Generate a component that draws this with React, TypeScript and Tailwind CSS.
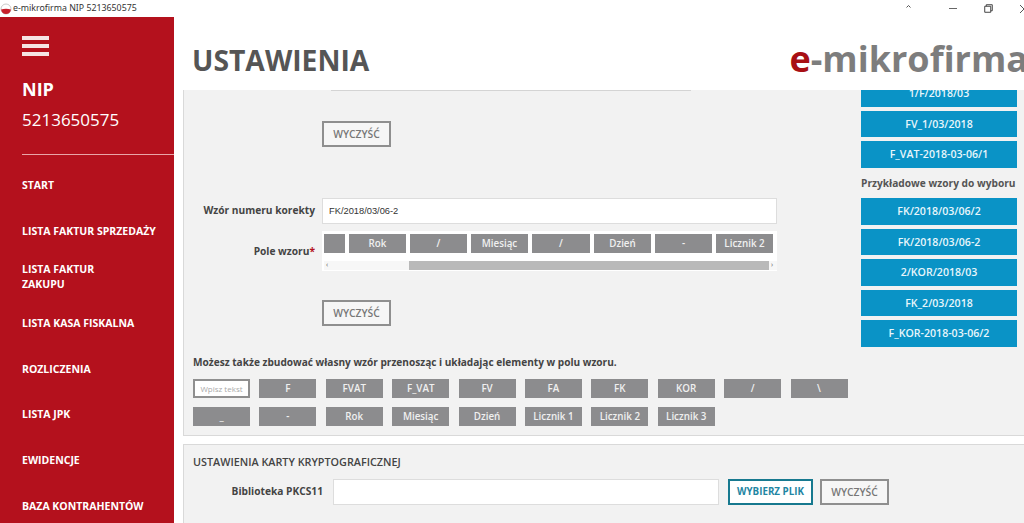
import React from "react";

const Chip = ({ t, w = "w-[57px]" }: { t: string; w?: string }) => (
  <div className={`${w} h-[19px] shrink-0 bg-[#8c8c8e] text-[#f0f0f0] text-[9.8px] font-semibold flex items-center justify-center pt-[1px]`}>{t}</div>
);

const Blue = ({ t, h = "h-[26.5px] pt-[2px]" }: { t: string; h?: string }) => (
  <div className={`${h} w-[156px] shrink-0 bg-[#0a93c6] text-[#e8f6fb] text-[10.6px] font-semibold flex items-center justify-center`}>{t}</div>
);

const Clear = () => (
  <div className="w-[69px] h-[26px] border-2 border-[#8f8f8f] bg-[#f6f6f6] text-[#777] text-[10.3px] font-semibold flex items-center justify-center pt-[1px]">WYCZYŚĆ</div>
);

const nav: string[] = [
  "START",
  "LISTA FAKTUR SPRZEDAŻY",
  "LISTA FAKTUR\nZAKUPU",
  "LISTA KASA FISKALNA",
  "ROZLICZENIA",
  "LISTA JPK",
  "EWIDENCJE",
  "BAZA KONTRAHENTÓW",
];

export default function App() {
  return (
    <div className="w-[1024px] h-[523px] overflow-hidden bg-white flex flex-col font-['Open_Sans',sans-serif]">
      <div className="h-[17px] shrink-0 flex items-center relative overflow-hidden">
        <svg width="12" height="12" viewBox="0 0 12 12">
          <circle cx="6" cy="6" r="5" fill="#fff" stroke="#bbb" strokeWidth="0.8" />
          <path d="M1 6.5 Q6 5 11 6.5 Q10 11 6 11 Q2 11 1 6.5Z" fill="#c8202c" />
        </svg>
        <span className="ml-[1px] text-[8.8px] text-[#333] font-['Noto_Sans',sans-serif]">e-mikrofirma NIP 5213650575</span>
        <div className="absolute -right-[4px] top-0 h-[17px] flex items-center">
          <svg width="5" height="3" viewBox="0 0 5 3" className="mr-[38px] -mt-[5px]"><path d="M0.5 2.5 L2.5 0.5 L4.5 2.5" fill="none" stroke="#555" strokeWidth="1" /></svg>
          <div className="w-[8px] h-[1px] bg-[#666] mr-[27px]" />
          <svg width="9" height="9" viewBox="0 0 10 10" className="mr-[27px]"><path d="M2.5 2.5V.8h6.7v6.7H7.5M.8 2.5h6.7v6.7H.8z" fill="none" stroke="#444" strokeWidth="1.1" /></svg>
          <svg width="8" height="10" viewBox="0 0 8 10"><path d="M0 1 L8 9 M8 1 L0 9" fill="none" stroke="#555" strokeWidth="1" /></svg>
        </div>
      </div>
      <div className="flex-1 flex min-h-0">
        <aside className="w-[174px] shrink-0 bg-[#b4111d] text-white flex flex-col overflow-hidden">
          <div className="ml-[22px] mt-[19px] w-[27px] shrink-0 flex flex-col gap-[4px]">
            <div className="h-[4px] bg-[#f6e4e4]" />
            <div className="h-[4px] bg-[#f6e4e4]" />
            <div className="h-[4px] bg-[#f6e4e4]" />
          </div>
          <div className="ml-[22px] mt-[21px] shrink-0 text-[18px] leading-[25px] font-bold">NIP</div>
          <div className="ml-[22px] mt-[5px] shrink-0 text-[17px] leading-[25px]">5213650575</div>
          <div className="ml-[22px] mt-[22px] h-px shrink-0 bg-[#e9a5a8]" />
          <nav className="mt-[8px] flex flex-col">
            {nav.map((t) => (
              <div key={t} className="h-[45.8px] shrink-0 pl-[22px] flex items-center whitespace-pre-line text-[10.5px] leading-[15px] font-bold">{t}</div>
            ))}
          </nav>
        </aside>
        <main className="flex-1 min-w-0 flex flex-col">
          <header className="h-[73px] shrink-0 pt-[13px] flex items-center justify-between overflow-hidden">
            <h1 className="ml-[18px] text-[28.3px] font-bold text-[#555] leading-none">USTAWIENIA</h1>
            <div className="text-[36px] font-bold leading-none whitespace-nowrap -mr-[4px] -mt-[2px] text-[#7d7d7d]"><span className="text-[#a80f14]">e</span>-mikrofirma</div>
          </header>
          <div className="ml-[9px] flex-1 min-h-0 flex flex-col overflow-hidden">
            <section className="h-[346px] shrink-0 bg-[#f2f2f2] border-b border-l border-[#d9d9d9] relative overflow-hidden">
              <div className="absolute left-[147px] top-0 w-[360px] h-px bg-[#d4d4d4]" />
              <div className="flex pr-[7px] h-full">
                <div className="flex-1 min-w-0 pl-[9px]">
                  <div className="ml-[129px] mt-[31px]"><Clear /></div>
                  <div className="mt-[51px] flex items-center">
                    <div className="w-[122px] mr-[7px] text-right text-[10.2px] font-bold text-[#444] whitespace-nowrap">Wzór numeru korekty</div>
                    <div className="w-[455px] h-[26px] bg-white border border-[#ddd] pl-[6px] pt-[1px] flex items-center text-[9.3px] text-[#333] font-['Liberation_Sans',sans-serif]">FK/2018/03/06-2</div>
                  </div>
                  <div className="mt-[7px] flex">
                    <div className="w-[122px] mr-[7px] mt-[13px] text-right text-[10.2px] font-bold text-[#444]">Pole wzoru<span className="text-[#b4111d]">*</span></div>
                    <div className="w-[455px] h-[40px] bg-white pl-[2px] pt-[3px]">
                      <div className="flex gap-[4px]">
                        <Chip t="" w="w-[21px]" />
                        <Chip t="Rok" /><Chip t="/" /><Chip t="Miesiąc" /><Chip t="/" w="w-[58px]" /><Chip t="Dzień" /><Chip t="-" /><Chip t="Licznik 2" />
                      </div>
                      <div className="mt-[8px] h-[9px] flex items-center bg-[#f7f7f7] text-[7px] text-[#555]">
                        <span className="w-[85px] pl-[2px]">‹</span>
                        <div className="w-[360px] h-[9px] bg-[#b9b9b9]" />
                        <span className="pl-[2px]">›</span>
                      </div>
                    </div>
                  </div>
                  <div className="ml-[129px] mt-[29px]"><Clear /></div>
                  <p className="mt-[29px] text-[10.1px] font-bold text-[#444] leading-[15px] whitespace-nowrap">Możesz także zbudować własny wzór przenosząc i układając elementy w polu wzoru.</p>
                  <div className="mt-[9px] flex gap-[9.4px]">
                    <div className="w-[57px] h-[19px] shrink-0 bg-white border-2 border-[#8f8f8f] text-[#aaa] text-[8px] flex items-center justify-center">Wpisz tekst</div>
                    {["F", "FVAT", "F_VAT", "FV", "FA", "FK", "KOR", "/", "\\"].map((t, i) => <Chip key={i} t={t} />)}
                  </div>
                  <div className="mt-[9px] flex gap-[9.4px]">
                    {["_", "-", "Rok", "Miesiąc", "Dzień", "Licznik 1", "Licznik 2", "Licznik 3"].map((t, i) => <Chip key={i} t={t} />)}
                  </div>
                </div>
                <div className="w-[156px] shrink-0 flex flex-col">
                  <div className="flex flex-col gap-[4px]">
                    <Blue t="1/F/2018/03" h="h-[16.5px] pb-[9px] overflow-hidden" />
                    <Blue t="FV_1/03/2018" />
                    <Blue t="F_VAT-2018-03-06/1" />
                  </div>
                  <div className="mt-[8.5px] h-[14px] leading-[14px] text-[10.2px] font-bold text-[#555] whitespace-nowrap">Przykładowe wzory do wyboru</div>
                  <div className="mt-[8px] flex flex-col gap-[4px]">
                    {["FK/2018/03/06/2", "FK/2018/03/06-2", "2/KOR/2018/03", "FK_2/03/2018", "F_KOR-2018-03-06/2"].map((t) => <Blue key={t} t={t} />)}
                  </div>
                </div>
              </div>
            </section>
            <div className="h-[8px] shrink-0" />
            <section className="flex-1 bg-[#f2f2f2] border-t border-l border-[#d9d9d9] pl-[9px]">
              <h2 className="mt-[9px] text-[10.8px] leading-[15px] font-semibold text-[#444]">USTAWIENIA KARTY KRYPTOGRAFICZNEJ</h2>
              <div className="mt-[10px] flex items-center">
                <div className="w-[130px] mr-[10px] text-right text-[10.2px] font-bold text-[#444]">Biblioteka PKCS11</div>
                <div className="w-[386px] h-[26px] bg-white border border-[#ddd]" />
                <div className="ml-[9px] w-[85px] h-[26px] border-2 border-[#17798f] bg-white text-[#1f86a3] text-[9.8px] font-bold flex items-center justify-center pt-[1px]">WYBIERZ PLIK</div>
                <div className="ml-[7px]"><Clear /></div>
              </div>
            </section>
          </div>
        </main>
      </div>
    </div>
  );
}
